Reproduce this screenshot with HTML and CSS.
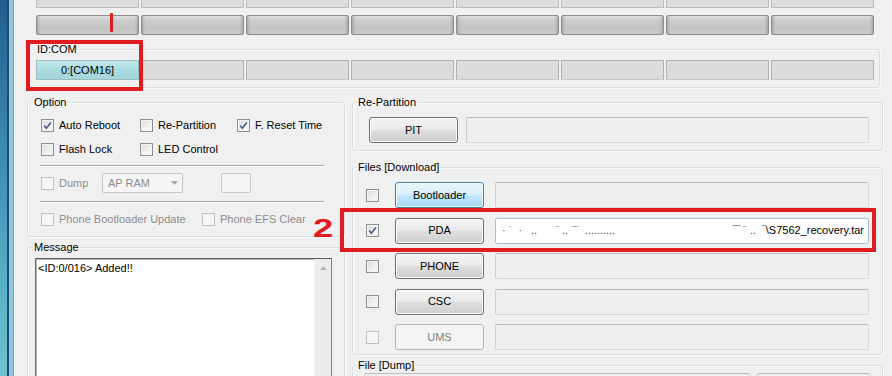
FILE: index.html
```html
<!DOCTYPE html>
<html>
<head>
<meta charset="utf-8">
<title>Odin</title>
<link rel="stylesheet" href="styles.css">
</head>
<body>
<div class="app">
  <div class="winframe"></div>
  <div class="content">
    <div class="cells row1">
      <div class="cell"></div><div class="cell"></div><div class="cell"></div><div class="cell"></div>
      <div class="cell"></div><div class="cell"></div><div class="cell"></div><div class="cell"></div>
    </div>
    <div class="cells row2">
      <div class="cell"></div><div class="cell"></div><div class="cell"></div><div class="cell"></div>
      <div class="cell"></div><div class="cell"></div><div class="cell"></div><div class="cell"></div>
    </div>
    <fieldset class="group idcom">
      <legend>ID:COM</legend>
      <div class="cells row3">
        <div class="cell port">0:[COM16]</div><div class="cell"></div><div class="cell"></div><div class="cell"></div>
        <div class="cell"></div><div class="cell"></div><div class="cell"></div><div class="cell"></div>
      </div>
    </fieldset>

    <div class="columns">
      <div class="col-left">
        <fieldset class="group option">
          <legend>Option</legend>
          <div class="opt-row">
            <label class="chk w99"><span class="cb on"><svg viewBox="0 0 11 11" width="11" height="11"><path d="M2.2 5.6 L4.4 8.2 L8.8 2.4" fill="none" stroke="#4b5f8f" stroke-width="1.7"/></svg></span>Auto Reboot</label>
            <label class="chk w97"><span class="cb"></span>Re-Partition</label>
            <label class="chk"><span class="cb on"><svg viewBox="0 0 11 11" width="11" height="11"><path d="M2.2 5.6 L4.4 8.2 L8.8 2.4" fill="none" stroke="#4b5f8f" stroke-width="1.7"/></svg></span>F. Reset Time</label>
          </div>
          <div class="opt-row gap11">
            <label class="chk w99"><span class="cb"></span>Flash Lock</label>
            <label class="chk"><span class="cb"></span>LED Control</label>
          </div>
          <div class="sep s1"></div>
          <div class="opt-row dump-row">
            <label class="chk w61 dis"><span class="cb"></span>Dump</label>
            <div class="combo"><span>AP RAM</span><svg class="arrow" viewBox="0 0 7 4" width="7" height="4"><path d="M0 0 H7 L3.5 4 Z" fill="#a8a8a8"/></svg></div>
            <div class="smallbox"></div>
          </div>
          <div class="sep s2"></div>
          <div class="opt-row phone-row">
            <label class="chk w161 dis"><span class="cb"></span>Phone Bootloader Update</label>
            <label class="chk dis"><span class="cb"></span>Phone EFS Clear</label>
          </div>
        </fieldset>

        <fieldset class="group message">
          <legend>Message</legend>
          <div class="msgbox">
            <div class="msgtext">&lt;ID:0/016&gt; Added!!</div>
            <div class="vscroll"><svg viewBox="0 0 7 4" width="7" height="4"><path d="M0 4 H7 L3.5 0 Z" fill="#b0b0b0"/></svg></div>
          </div>
        </fieldset>
      </div>

      <div class="col-right">
        <fieldset class="group repart">
          <legend>Re-Partition</legend>
          <div class="prow">
            <div class="btn">PIT</div>
            <div class="field wide"></div>
          </div>
        </fieldset>

        <fieldset class="group files">
          <legend>Files [Download]</legend>
          <div class="frow">
            <span class="cb"></span>
            <div class="btn hover">Bootloader</div>
            <div class="field"></div>
          </div>
          <div class="frow">
            <span class="cb on"><svg viewBox="0 0 11 11" width="11" height="11"><path d="M2.2 5.6 L4.4 8.2 L8.8 2.4" fill="none" stroke="#4b5f8f" stroke-width="1.7"/></svg></span>
            <div class="btn">PDA</div>
            <div class="field filled"><span class="redact">&middot; &#729;&nbsp; &middot;&nbsp;&nbsp; &#8229;&nbsp;&nbsp;&nbsp;&nbsp;&nbsp; &#168; &#8229; &#168;&#168;&nbsp; &#8229;&#8229;&#8229;&#8229;&#8229;</span><span class="blank"></span><span class="redact">&#8254;&#8254; &#168; &#8229;&nbsp; &#8254;</span><span>\S7562_recovery.tar</span></div>
          </div>
          <div class="frow">
            <span class="cb"></span>
            <div class="btn">PHONE</div>
            <div class="field"></div>
          </div>
          <div class="frow">
            <span class="cb"></span>
            <div class="btn">CSC</div>
            <div class="field"></div>
          </div>
          <div class="frow">
            <span class="cb dis"></span>
            <div class="btn disabled">UMS</div>
            <div class="field"></div>
          </div>
        </fieldset>

        <fieldset class="group dumpfiles">
          <legend>File [Dump]</legend>
          <div class="drow">
            <div class="field d1"></div>
            <div class="field d2"></div>
          </div>
        </fieldset>
      </div>
    </div>
  </div>

  <div class="mark box1"></div>
  <div class="mark one"></div>
  <div class="mark box2"></div>
  <div class="mark two">2</div>
</div>
</body>
</html>
```

FILE: styles.css
```css
* { box-sizing: border-box; }

html, body {
  margin: 0;
  padding: 0;
  width: 892px;
  height: 376px;
  overflow: hidden;
  background: #f0f0f0;
  font-family: "Liberation Sans", Arial, sans-serif;
  font-size: 11px;
  color: #000;
}

.app {
  position: relative;
  display: flex;
  width: 892px;
  height: 376px;
  overflow: hidden;
}

.winframe {
  flex: none;
  width: 15px;
  background:
    linear-gradient(to right, transparent 0 7px, #2b4a5e 7px 9px, #8fc7ea 9px 13px, #6fa6c8 13px 14px, #f7f7f7 14px 15px),
    linear-gradient(to bottom, #1f5e8e 0%, #3c8ab4 40%, #56b0c6 75%, #6cc3cf 100%);
}

.content {
  flex: 1;
  display: flex;
  flex-direction: column;
}

/* port cells */
.cells {
  display: flex;
  gap: 2px;
  padding-left: 21px;
}
.cell {
  flex: none;
  width: 103px;
  height: 20px;
}
.row1 { margin-top: -12px; }
.row1 .cell {
  background: #dddddd;
  border: 1px solid #bdbdbd;
}
.row2 { margin-top: 7px; }
.row2 .cell {
  border: 1px solid #8e8e8e;
  border-radius: 2px;
  background: linear-gradient(to bottom, #e2e2e2 0%, #cdcdcd 22%, #c4c4c4 70%, #cbcbcb 100%);
  box-shadow: inset 3px 0 3px -2px #9c9c9c, inset -3px 0 3px -2px #9c9c9c;
}
.cells.row3 { padding-left: 0; }
.row3 .cell {
  background: #dcdcdc;
  border: 1px solid #b2b2b2;
  border-bottom-color: #c8c8c8;
}
.row3 .port {
  background: linear-gradient(to bottom, #c3e8ec 0%, #a9dbe0 50%, #a4d6dc 100%);
  border-color: #9cbcc2;
  display: flex;
  align-items: center;
  justify-content: center;
  line-height: 13px;
}

/* group boxes */
.group {
  margin: 0;
  padding: 0;
  min-width: 0;
  border: 1px solid #d5dfe5;
  border-radius: 3px;
  box-shadow: inset 1px 1px 0 #fbfbfb, 1px 1px 0 #fbfbfb;
}
.group > legend {
  padding: 0 1px;
  height: 13px;
  line-height: 13px;
  font-size: 11px;
}

.idcom {
  margin: 8px 0 0 12px;
  width: 853px;
  padding: 4px 0 7px 8px;
}

.columns {
  display: flex;
  gap: 7px;
  margin: 8px 0 0 12px;
}
.col-left {
  flex: none;
  width: 318px;
  display: flex;
  flex-direction: column;
}
.col-right {
  flex: none;
  width: 531px;
  display: flex;
  flex-direction: column;
}

/* options */
.option {
  padding: 10px 0 10px 13px;
}
.option > legend { margin-left: -8px; }

.opt-row {
  display: flex;
  align-items: center;
  height: 13px;
}
.gap11 { margin-top: 11px; }

.chk {
  display: flex;
  align-items: center;
  gap: 5px;
  line-height: 13px;
  white-space: nowrap;
}
.w99 { width: 99px; }
.w97 { width: 97px; }
.w61 { width: 61px; }
.w161 { width: 161px; }
.chk.dis { color: #8d8d8d; }

.cb {
  flex: none;
  width: 13px;
  height: 13px;
  border: 1px solid #8e8f8f;
  background: linear-gradient(135deg, #dadada 0%, #f0f0f0 55%, #fbfbfb 100%);
  box-shadow: inset 0 0 0 1px #f4f4f4;
  display: flex;
  align-items: center;
  justify-content: center;
}
.cb svg { display: block; }
.chk.dis .cb, .cb.dis {
  border-color: #c2c2c2;
  background: #f6f6f6;
  box-shadow: none;
}

.sep {
  width: 284px;
  margin-left: -1px;
  border-top: 1px solid #a9a9a9;
  border-bottom: 1px solid #ffffff;
  height: 2px;
}
.s1 { margin-top: 9px; }
.s2 { margin-top: 8px; }

.opt-row.dump-row {
  height: 20px;
  margin-top: 6px;
}
.combo {
  flex: none;
  width: 81px;
  height: 20px;
  border: 1px solid #c6c6c6;
  border-radius: 2px;
  background: #f5f5f5;
  color: #8d8d8d;
  display: flex;
  align-items: center;
  justify-content: space-between;
  padding: 0 4px 0 5px;
  line-height: 13px;
}
.combo .arrow { display: block; }
.smallbox {
  flex: none;
  width: 30px;
  height: 20px;
  margin-left: 38px;
  border: 1px solid #c8c8c8;
  border-radius: 2px;
  background: #f4f4f4;
}
.phone-row { margin-top: 10px; }

/* message */
.message {
  margin-top: 4px;
  padding: 4px 12px 0 7px;
}
.message > legend { margin-left: -2px; }
.msgbox {
  width: 297px;
  height: 130px;
  border: 1px solid #7c7c7c;
  border-top-color: #5e5e5e;
  border-left-color: #6a6a6a;
  background: #ffffff;
  display: flex;
}
.msgtext {
  flex: 1;
  padding: 3px 2px;
  line-height: 13px;
  box-shadow: inset 1px 1px 0 #b8b8b8;
}
.vscroll {
  flex: none;
  width: 17px;
  background: #ececec;
  border-left: 1px solid #f7f7f7;
  display: flex;
  justify-content: center;
  padding-top: 7px;
}
.vscroll svg { display: block; }

/* buttons and fields */
.btn {
  flex: none;
  width: 89px;
  height: 26px;
  border: 1px solid #707070;
  border-radius: 3px;
  background: linear-gradient(to bottom, #f4f4f4 0%, #ebebeb 45%, #dcdcdc 55%, #cfcfcf 100%);
  box-shadow: inset 0 0 0 1px #fbfbfb;
  display: flex;
  align-items: center;
  justify-content: center;
  line-height: 13px;
}
.btn.hover {
  border-color: #3c7fb1;
  background: linear-gradient(to bottom, #eaf6fd 0%, #d9f0fc 45%, #bee6fd 55%, #a7d9f5 100%);
}
.btn.disabled {
  border-color: #b3b6b8;
  background: #f4f4f4;
  color: #838383;
  box-shadow: none;
}

.field {
  flex: none;
  height: 26px;
  border: 1px solid #d9d9d9;
  border-top-color: #bcbcbc;
  border-left-color: #cfcfcf;
  border-radius: 2px;
  background: #efefef;
}

.repart {
  padding: 8px 0 7px 16px;
}
.repart > legend { margin-left: -12px; }
.prow {
  display: flex;
  align-items: center;
  gap: 8px;
}
.field.wide { width: 403px; }

.files {
  margin-top: 10px;
  padding: 8px 0 4px 13px;
}
.files > legend { margin-left: -9px; }
.frow {
  display: flex;
  align-items: center;
  height: 26px;
}
.frow + .frow { margin-top: 9.5px; }
.frow .cb { margin-right: 16px; }
.frow .btn { margin-right: 11px; }
.frow .field { width: 374px; }
.frow .field.filled {
  background: #ffffff;
  border: 1px solid #a9c0d6;
  display: flex;
  align-items: center;
  padding: 0 4px 0 6px;
  line-height: 13px;
  white-space: nowrap;
  overflow: hidden;
}
.redact { color: #6a6a6a; }
.blank { flex: 1; }

.dumpfiles {
  margin-top: 4px;
  padding: 1px 0 0 11px;
}
.dumpfiles > legend { margin-left: -7px; }
.drow {
  display: flex;
  gap: 7px;
}
.field.d1 { width: 386px; }
.field.d2 { width: 113px; }

/* red annotations */
.mark { position: absolute; }
.box1 {
  left: 26px;
  top: 40px;
  width: 117px;
  height: 51px;
  border: 4px solid #e11b22;
}
.one {
  left: 110px;
  top: 13px;
  width: 3px;
  height: 19px;
  background: #e11b22;
  border-radius: 1px;
}
.box2 {
  left: 340px;
  top: 208px;
  width: 536px;
  height: 44px;
  border: 4px solid #e11b22;
}
.two {
  left: 313px;
  top: 215px;
  font-family: "Liberation Sans", Arial, sans-serif;
  font-weight: bold;
  font-size: 26px;
  line-height: 26px;
  color: #e11b22;
  transform: scaleX(1.4);
  transform-origin: left top;
}
```
